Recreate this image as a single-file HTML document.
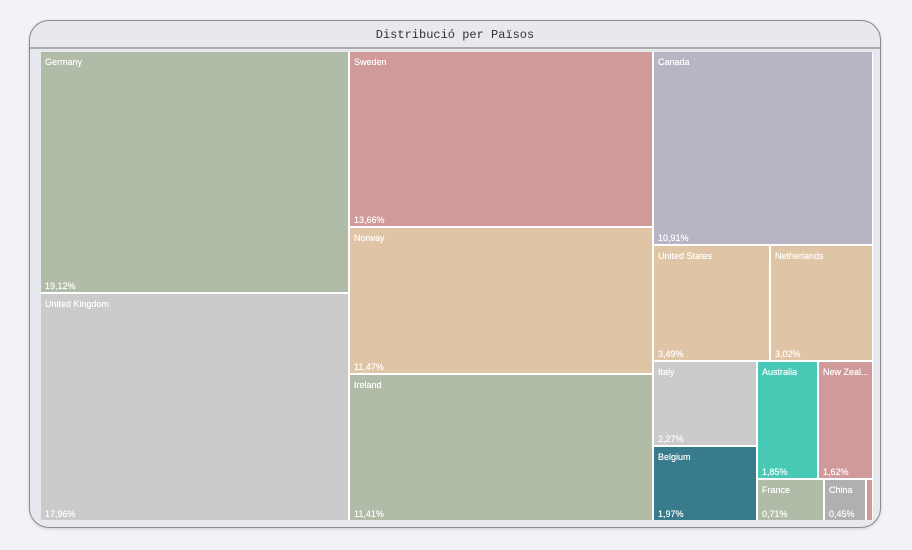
<!DOCTYPE html><html><head><style>
body{margin:0;background:#f2f3f7;width:912px;height:550px;position:relative;overflow:hidden;font-family:"Liberation Sans","DejaVu Sans",sans-serif}
.card{position:absolute;left:29px;top:20px;width:850px;height:506px;border:1px solid #8a8a8a;border-radius:20px;background:#e8e9ee;box-shadow:0 1px 3px rgba(0,0,0,.15)}
.hd{position:absolute;left:0;right:0;top:0;height:26px;border-bottom:2px solid #aaa;text-align:center;font-family:"Liberation Mono",monospace;font-size:12px;line-height:28px;color:#333}
.t{position:absolute;color:#fff;font-size:9px;box-sizing:border-box;overflow:hidden;white-space:nowrap;text-shadow:0 0 .4px #fff}
.t .n{position:absolute;left:4px;top:5px}
.t .p{position:absolute;left:4px;bottom:1px}
.bg{position:absolute;left:41px;top:52px;width:832px;height:468px;background:#fff}
</style></head><body>
<div class="card"><div class="hd">Distribució per Països</div></div>
<div class="bg"></div>
<div class="t" style="left:41px;top:52px;width:307px;height:240px;background:#b0bba8"><span class="n">Germany</span><span class="p">19,12%</span></div>
<div class="t" style="left:41px;top:294px;width:307px;height:226px;background:#cbcbcb"><span class="n">United Kingdom</span><span class="p">17,96%</span></div>
<div class="t" style="left:350px;top:52px;width:302px;height:174px;background:#cf9a99"><span class="n">Sweden</span><span class="p">13,66%</span></div>
<div class="t" style="left:350px;top:228px;width:302px;height:145px;background:#e0c4a6"><span class="n">Norway</span><span class="p">11,47%</span></div>
<div class="t" style="left:350px;top:375px;width:302px;height:145px;background:#b0bba8"><span class="n">Ireland</span><span class="p">11,41%</span></div>
<div class="t" style="left:654px;top:52px;width:218px;height:192px;background:#b8b4c3"><span class="n">Canada</span><span class="p">10,91%</span></div>
<div class="t" style="left:654px;top:246px;width:115px;height:114px;background:#e0c4a6"><span class="n">United States</span><span class="p">3,49%</span></div>
<div class="t" style="left:771px;top:246px;width:101px;height:114px;background:#e0c4a6"><span class="n">Netherlands</span><span class="p">3,02%</span></div>
<div class="t" style="left:654px;top:362px;width:102px;height:83px;background:#cbcbcb"><span class="n">Italy</span><span class="p">2,27%</span></div>
<div class="t" style="left:654px;top:447px;width:102px;height:73px;background:#377b8d"><span class="n">Belgium</span><span class="p">1,97%</span></div>
<div class="t" style="left:758px;top:362px;width:59px;height:116px;background:#47c9b5"><span class="n">Australia</span><span class="p">1,85%</span></div>
<div class="t" style="left:819px;top:362px;width:53px;height:116px;background:#cf9a99"><span class="n">New Zeal...</span><span class="p">1,62%</span></div>
<div class="t" style="left:758px;top:480px;width:65px;height:40px;background:#b0bba8"><span class="n">France</span><span class="p">0,71%</span></div>
<div class="t" style="left:825px;top:480px;width:40px;height:40px;background:#b0b0b0"><span class="n">China</span><span class="p">0,45%</span></div>
<div class="t" style="left:867px;top:480px;width:5px;height:40px;background:#cf9a99"></div>
</body></html>
